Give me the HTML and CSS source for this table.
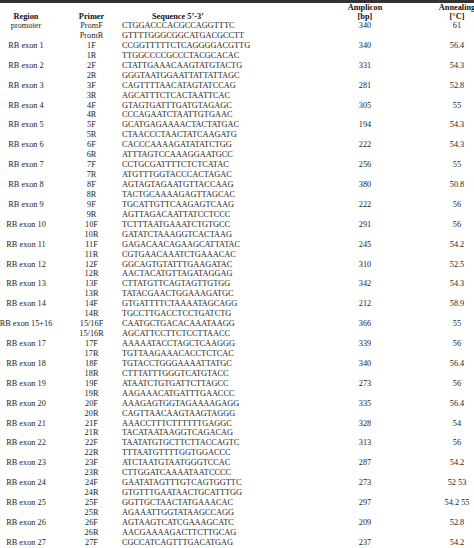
FILE: index.html
```html
<!DOCTYPE html>
<html>
<head>
<meta charset="utf-8">
<link rel="stylesheet" href="styles.css">
</head>
<body>
<div class="table">
  <div class="row head"><span class="amp">Amplicon</span><span class="ann">Annealing</span></div>
  <div class="row head"><span class="reg">Region</span><span class="pri">Primer</span><span class="seq seqh">Sequence 5’-3’</span><span class="amp">[bp]</span><span class="ann">[°C]</span></div>

  <div class="row"><span class="reg">promoter</span><span class="pri">PromF</span><span class="seq">CTGGACCCACGCCAGGTTTC</span><span class="amp">340</span><span class="ann">61</span></div>
  <div class="row"><span class="pri">PromR</span><span class="seq">GTTTTGGGCGGCATGACGCCTT</span></div>
  <div class="row"><span class="reg">RB exon 1</span><span class="pri">1F</span><span class="seq">CCGGTTTTTCTCAGGGGACGTTG</span><span class="amp">340</span><span class="ann">56.4</span></div>
  <div class="row"><span class="pri">1R</span><span class="seq">TTGGCCCCGCCCTACGCACAC</span></div>
  <div class="row"><span class="reg">RB exon 2</span><span class="pri">2F</span><span class="seq">CTATTGAAACAAGTATGTACTG</span><span class="amp">331</span><span class="ann">54.3</span></div>
  <div class="row"><span class="pri">2R</span><span class="seq">GGGTAATGGAATTATTATTAGC</span></div>
  <div class="row"><span class="reg">RB exon 3</span><span class="pri">3F</span><span class="seq">CAGTTTTAACATAGTATCCAG</span><span class="amp">281</span><span class="ann">52.8</span></div>
  <div class="row"><span class="pri">3R</span><span class="seq">AGCATTTCTCACTAATTCAC</span></div>
  <div class="row"><span class="reg">RB exon 4</span><span class="pri">4F</span><span class="seq">GTAGTGATTTGATGTAGAGC</span><span class="amp">305</span><span class="ann">55</span></div>
  <div class="row"><span class="pri">4R</span><span class="seq">CCCAGAATCTAATTGTGAAC</span></div>
  <div class="row"><span class="reg">RB exon 5</span><span class="pri">5F</span><span class="seq">GCATGAGAAAACTACTATGAC</span><span class="amp">194</span><span class="ann">54.3</span></div>
  <div class="row"><span class="pri">5R</span><span class="seq">CTAACCCTAACTATCAAGATG</span></div>
  <div class="row"><span class="reg">RB exon 6</span><span class="pri">6F</span><span class="seq">CACCCAAAAGATATATCTGG</span><span class="amp">222</span><span class="ann">54.3</span></div>
  <div class="row"><span class="pri">6R</span><span class="seq">ATTTAGTCCAAAGGAATGCC</span></div>
  <div class="row"><span class="reg">RB exon 7</span><span class="pri">7F</span><span class="seq">CCTGCGATTTTCTCTCATAC</span><span class="amp">256</span><span class="ann">55</span></div>
  <div class="row"><span class="pri">7R</span><span class="seq">ATGTTTGGTACCCACTAGAC</span></div>
  <div class="row"><span class="reg">RB exon 8</span><span class="pri">8F</span><span class="seq">AGTAGTAGAATGTTACCAAG</span><span class="amp">380</span><span class="ann">50.8</span></div>
  <div class="row"><span class="pri">8R</span><span class="seq">TACTGCAAAAGAGTTAGCAC</span></div>
  <div class="row"><span class="reg">RB exon 9</span><span class="pri">9F</span><span class="seq">TGCATTGTTCAAGAGTCAAG</span><span class="amp">222</span><span class="ann">56</span></div>
  <div class="row"><span class="pri">9R</span><span class="seq">AGTTAGACAATTATCCTCCC</span></div>
  <div class="row"><span class="reg">RB exon 10</span><span class="pri">10F</span><span class="seq">TCTTTAATGAAATCTGTGCC</span><span class="amp">291</span><span class="ann">56</span></div>
  <div class="row"><span class="pri">10R</span><span class="seq">GATATCTAAAGGTCACTAAG</span></div>
  <div class="row"><span class="reg">RB exon 11</span><span class="pri">11F</span><span class="seq">GAGACAACAGAAGCATTATAC</span><span class="amp">245</span><span class="ann">54.2</span></div>
  <div class="row"><span class="pri">11R</span><span class="seq">CGTGAACAAATCTGAAACAC</span></div>
  <div class="row"><span class="reg">RB exon 12</span><span class="pri">12F</span><span class="seq">GGCAGTGTATTTGAAGATAC</span><span class="amp">310</span><span class="ann">52.5</span></div>
  <div class="row"><span class="pri">12R</span><span class="seq">AACTACATGTTAGATAGGAG</span></div>
  <div class="row"><span class="reg">RB exon 13</span><span class="pri">13F</span><span class="seq">CTTATGTTCAGTAGTTGTGG</span><span class="amp">342</span><span class="ann">54.3</span></div>
  <div class="row"><span class="pri">13R</span><span class="seq">TATACGAACTGGAAAGATGC</span></div>
  <div class="row"><span class="reg">RB exon 14</span><span class="pri">14F</span><span class="seq">GTGATTTTCTAAAATAGCAGG</span><span class="amp">212</span><span class="ann">58.9</span></div>
  <div class="row"><span class="pri">14R</span><span class="seq">TGCCTTGACCTCCTGATCTG</span></div>
  <div class="row"><span class="reg">RB exon 15+16</span><span class="pri">15/16F</span><span class="seq">CAATGCTGACACAAATAAGG</span><span class="amp">366</span><span class="ann">55</span></div>
  <div class="row"><span class="pri">15/16R</span><span class="seq">AGCATTCCTTCTCCTTAACC</span></div>
  <div class="row"><span class="reg">RB exon 17</span><span class="pri">17F</span><span class="seq">AAAAATACCTAGCTCAAGGG</span><span class="amp">339</span><span class="ann">56</span></div>
  <div class="row"><span class="pri">17R</span><span class="seq">TGTTAAGAAACACCTCTCAC</span></div>
  <div class="row"><span class="reg">RB exon 18</span><span class="pri">18F</span><span class="seq">TGTACCTGGGAAAATTATGC</span><span class="amp">340</span><span class="ann">56.4</span></div>
  <div class="row"><span class="pri">18R</span><span class="seq">CTTTATTTGGGTCATGTACC</span></div>
  <div class="row"><span class="reg">RB exon 19</span><span class="pri">19F</span><span class="seq">ATAATCTGTGATTCTTAGCC</span><span class="amp">273</span><span class="ann">56</span></div>
  <div class="row"><span class="pri">19R</span><span class="seq">AAGAAACATGATTTGAACCC</span></div>
  <div class="row"><span class="reg">RB exon 20</span><span class="pri">20F</span><span class="seq">AAAGAGTGGTAGAAAAGAGG</span><span class="amp">335</span><span class="ann">56.4</span></div>
  <div class="row"><span class="pri">20R</span><span class="seq">CAGTTAACAAGTAAGTAGGG</span></div>
  <div class="row"><span class="reg">RB exon 21</span><span class="pri">21F</span><span class="seq">AAACCTTTCTTTTTTGAGGC</span><span class="amp">328</span><span class="ann">54</span></div>
  <div class="row"><span class="pri">21R</span><span class="seq">TACATAATAAGGTCAGACAG</span></div>
  <div class="row"><span class="reg">RB exon 22</span><span class="pri">22F</span><span class="seq">TAATATGTGCTTCTTACCAGTC</span><span class="amp">313</span><span class="ann">56</span></div>
  <div class="row"><span class="pri">22R</span><span class="seq">TTTAATGTTTTGGTGGACCC</span></div>
  <div class="row"><span class="reg">RB exon 23</span><span class="pri">23F</span><span class="seq">ATCTAATGTAATGGGTCCAC</span><span class="amp">287</span><span class="ann">54.2</span></div>
  <div class="row"><span class="pri">23R</span><span class="seq">CTTGGATCAAAATAATCCCC</span></div>
  <div class="row"><span class="reg">RB exon 24</span><span class="pri">24F</span><span class="seq">GAATATAGTTTGTCAGTGGTTC</span><span class="amp">273</span><span class="ann">52 53</span></div>
  <div class="row"><span class="pri">24R</span><span class="seq">GTGTTTGAATAACTGCATTTGG</span></div>
  <div class="row"><span class="reg">RB exon 25</span><span class="pri">25F</span><span class="seq">GGTTGCTAACTATGAAACAC</span><span class="amp">297</span><span class="ann">54.2 55</span></div>
  <div class="row"><span class="pri">25R</span><span class="seq">AGAAATTGGTATAAGCCAGG</span></div>
  <div class="row"><span class="reg">RB exon 26</span><span class="pri">26F</span><span class="seq">AGTAAGTCATCGAAAGCATC</span><span class="amp">209</span><span class="ann">52.8</span></div>
  <div class="row"><span class="pri">26R</span><span class="seq">AACGAAAAGACTTCTTGCAG</span></div>
  <div class="row"><span class="reg">RB exon 27</span><span class="pri">27F</span><span class="seq">CGCCATCAGTTTGACATGAG</span><span class="amp">237</span><span class="ann">54.2</span></div>
</div>
</body>
</html>
```

FILE: styles.css
```css
html, body {
  margin: 0;
  padding: 0;
  background: #ffffff;
  overflow: hidden;
}

.table {
  width: 474px;
  border-top: 3px solid #333333;
  font-family: "Liberation Serif", "Times New Roman", serif;
  font-size: 8.3px;
  color: #1e1e1e;
}

.row {
  display: grid;
  grid-template-columns: 52px 70px 208px 70px 74px;
  height: 9.94px;
  line-height: 9.94px;
  white-space: nowrap;
}

.row.head {
  height: 9px;
  line-height: 9px;
  font-weight: bold;
  color: #111111;
}

.row > span {
  display: flex;
  justify-content: center;
  min-width: 0;
}

.reg { grid-column: 1; }
.pri { grid-column: 2; padding-left: 9px; }
.seq { grid-column: 3; justify-content: flex-start !important; }
.seqh { padding-left: 30px; }
.amp { grid-column: 4; }
.ann { grid-column: 5; padding-left: 40px; }
```
